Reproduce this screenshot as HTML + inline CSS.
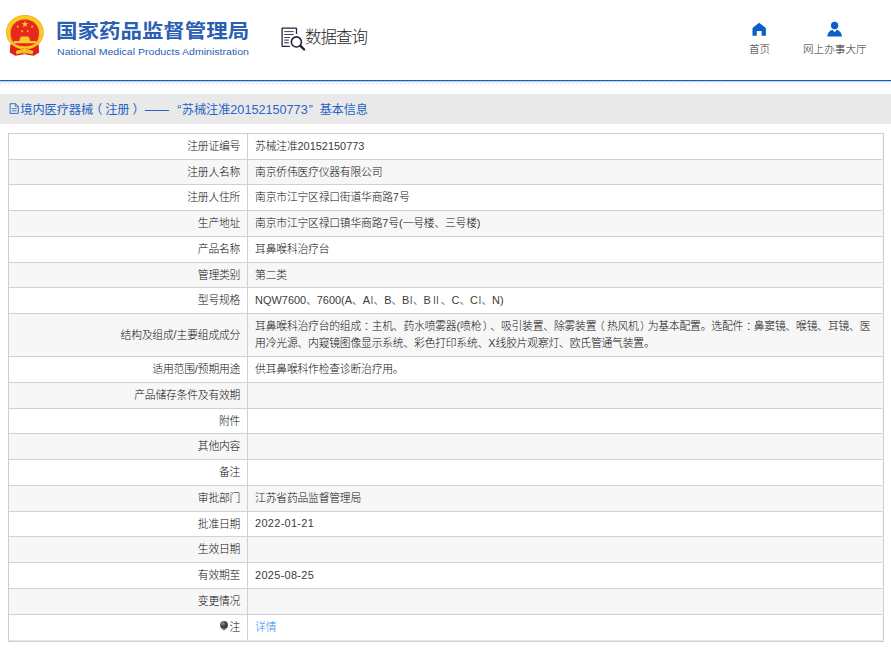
<!DOCTYPE html>
<html lang="zh-CN">
<head>
<meta charset="utf-8">
<title>国家药品监督管理局 数据查询</title>
<style>
*{box-sizing:border-box;margin:0;padding:0}
html,body{width:891px;height:650px;background:#fff;overflow:hidden}
body{position:relative;text-spacing-trim:space-all;font-family:"Liberation Sans","Noto Sans CJK SC",sans-serif;color:#333;font-size:10.5px}
.abs{position:absolute;white-space:nowrap}
#emblem{left:0;top:0}
#t1{left:56.2px;top:16.8px;font-size:19.6px;font-weight:bold;color:#2b5fb4;line-height:28px;transform:scaleX(1.096);transform-origin:0 0}
#t2{left:56.8px;top:44.9px;font-size:9.7px;color:#2b5fb4;line-height:13px;transform:scaleX(1.09);transform-origin:0 0}
#qicon{left:274px;top:20px}
#qtxt{left:305px;top:24px;font-size:16.5px;color:#1c1c1c;font-weight:300;line-height:26px;letter-spacing:-1px}
.nav{font-size:10.6px;color:#2a2a2a;font-weight:300;line-height:14px;text-align:center;letter-spacing:0}
#n1{left:739.5px;top:42px;width:40px}
#n2{left:794.8px;top:42px;width:80px}
#i1{left:748px;top:18px}
#i2{left:822px;top:18px}
#line{left:0;top:80px;width:891px;height:2px;background:linear-gradient(#1560c6 0,#1560c6 1px,rgba(21,96,198,.28) 1px,rgba(21,96,198,.28) 2px);z-index:2}
#hatch{left:0;top:81px;width:891px;height:4px;
 background:repeating-linear-gradient(135deg,#fff 0,#fff 1.83px,#eaeaea 1.98px,#eaeaea 2.83px)}
#bar{left:0;top:94px;width:891px;height:30px;background:#e9e9e9}
#bartxt{left:0;top:101.5px;width:400px;height:16px;font-size:12.25px;line-height:16px;color:#2563c6;letter-spacing:-0.12px}
#bartxt>span{position:absolute;top:0}
#bartxt .bd{color:#2a66c8;font-size:12.65px;letter-spacing:0}
#bartxt i{font-style:normal;position:relative}
#docicon{left:8px;top:101.2px}
#tbl{left:8px;top:133px;width:876px;height:509px;border:1px solid #cfcdcf;background:#f4f5fa}
.r{position:absolute;left:0;width:873px;border-bottom:1px solid #d2d0d2;background:#fff}
.r.g{background:#f7f7f7}
.r.last{border-bottom-color:#e6e7ee}
.r .k,.r .v{font-size:10.8px;letter-spacing:-0.2px;font-weight:300;color:#0c0c0c;line-height:17.3px}
.r .k>span,.r .v>span{position:relative;top:0.3px}
.l{letter-spacing:0;color:#3c3c3c;font-size:10.95px;position:relative;top:-0.4px}
.d{letter-spacing:0.3px}
.bulb{vertical-align:-0.3px;margin-right:1.2px}
i{font-style:normal;position:relative}
.pl{left:-2.2px}.pr{left:1.4px;margin-right:-1.6px}.pc{left:2.8px}
.rn1{display:inline-block;width:10.6px;margin:0 -3.5px}
.rn2{display:inline-block;width:10.6px;margin:0 -0.3px}
.r .k{position:absolute;left:0;top:0;bottom:0;width:239px;border-right:1px solid #d2d0d2;text-align:right;padding-right:6.8px;display:flex;align-items:center;justify-content:flex-end;white-space:nowrap}
.r .v{position:absolute;left:239px;top:0;bottom:0;right:0;padding-left:7.1px;display:flex;align-items:center}
a{color:#2f8ef0;text-decoration:none}
</style>
</head>
<body>
<svg id="emblem" class="abs" viewBox="0 0 56 64" width="56" height="64">
<path d="M10.4 44.2 L9.7 52.6 L15.2 55.7 L24.5 54.2 L33.8 55.7 L39.2 52.6 L38.6 44.2 Z" fill="#dd241c"/>
<ellipse cx="24.9" cy="32.3" rx="18.9" ry="17.3" fill="#f3ab20"/>
<ellipse cx="24.9" cy="32.3" rx="18.2" ry="16.6" fill="#f8cb26"/>
<path d="M10.2 32.3 A14.6 13.3 0 0 1 39.4 32.3 C39.4 41.8 35.8 46.7 24.8 46.7 C13.8 46.7 10.2 41.8 10.2 32.3 Z" fill="#f2a722"/>
<path d="M10.7 32.3 A14.1 12.8 0 0 1 38.9 32.3 C38.9 41.5 35.5 46.2 24.8 46.2 C14.1 46.2 10.7 41.5 10.7 32.3 Z" fill="#e8281e"/>
<polygon points="25.00,20.80 25.84,23.04 28.23,23.15 26.36,24.64 27.00,26.95 25.00,25.63 23.00,26.95 23.64,24.64 21.77,23.15 24.16,23.04" fill="#f8cc2a"/>
<polygon points="17.80,25.10 18.17,26.09 19.23,26.14 18.40,26.79 18.68,27.81 17.80,27.23 16.92,27.81 17.20,26.79 16.37,26.14 17.43,26.09" fill="#f8cc2a"/>
<polygon points="32.10,25.10 32.47,26.09 33.53,26.14 32.70,26.79 32.98,27.81 32.10,27.23 31.22,27.81 31.50,26.79 30.67,26.14 31.73,26.09" fill="#f8cc2a"/>
<polygon points="22.20,29.70 22.57,30.69 23.63,30.74 22.80,31.39 23.08,32.41 22.20,31.83 21.32,32.41 21.60,31.39 20.77,30.74 21.83,30.69" fill="#f8cc2a"/>
<polygon points="27.80,29.70 28.17,30.69 29.23,30.74 28.40,31.39 28.68,32.41 27.80,31.83 26.92,32.41 27.20,31.39 26.37,30.74 27.43,30.69" fill="#f8cc2a"/>
<path d="M19.4 40.9 L20.2 37.6 L21.6 36.4 L27.9 36.4 L29.3 37.6 L30 40.9 L36.2 41 L36.4 43.3 L13.6 43.3 L13.8 41 Z" fill="#f8cc2a"/>
<path d="M15.8 51 Q20 49.2 22.6 50.6 Q24.6 48 26.6 50.6 Q29 49.2 33.4 51 L32.6 54.2 L24.5 52.8 L16.4 54.2 Z" fill="#f5c422"/>
<ellipse cx="22.6" cy="48.4" rx="2.3" ry="1.9" fill="#f6c824"/>
<ellipse cx="26.8" cy="48.4" rx="2.3" ry="1.9" fill="#f6c824"/>
<ellipse cx="22.6" cy="48.5" rx="0.9" ry="0.6" fill="#e6541e"/>
<ellipse cx="26.8" cy="48.5" rx="0.9" ry="0.6" fill="#e6541e"/>
<ellipse cx="24.6" cy="52.6" rx="2.4" ry="1.2" fill="#f1b21e"/>
</svg>
<div id="t1" class="abs">国家药品监督管理局</div>
<div id="t2" class="abs">National Medical Products Administration</div>
<svg id="qicon" class="abs" viewBox="274 20 40 36" width="40" height="36">
<path d="M296.5 34 V28.6 Q296.5 28.1 296 28.1 H282.6 Q282.1 28.1 282.1 28.6 V45.9 Q282.1 46.4 282.6 46.4 H289.9" fill="none" stroke="#26263e" stroke-width="1.3"/>
<g stroke="#2a2a42" stroke-width="0.9"><path d="M284.2 31.6 H293.7"/><path d="M284.2 34.5 H293.7"/><path d="M284.2 37.5 H290"/><path d="M284.2 40.1 H288.8" stroke-width="1.2" stroke="#4a4a60"/><path d="M284.2 42.7 H288.8" stroke-width="1.2" stroke="#4a4a60"/></g>
<circle cx="296.4" cy="41.9" r="5.05" fill="#fff" stroke="#1f1f38" stroke-width="1.55"/>
<path d="M300.5 45.9 L304.1 49.5" stroke="#1f1f38" stroke-width="2.4" stroke-linecap="round"/>
</svg>
<div id="qtxt" class="abs">数据查询</div>
<svg id="i1" class="abs" viewBox="748 18 24 22" width="24" height="22">
<path d="M759.15 22.7 L765.9 27.9 V35.8 H761.6 V31 H756.8 V35.8 H752.5 V27.9 Z" fill="#0a60c8"/>
</svg>
<svg id="i2" class="abs" viewBox="822 18 26 22" width="26" height="22">
<circle cx="834.6" cy="25.5" r="3.65" fill="#0a60c8"/>
<path d="M827.3 36.5 Q827.6 31.5 832.4 29.7 L834.6 32.2 L836.8 29.7 Q841.6 31.5 842 36.5 Z" fill="#0a60c8"/>
</svg>
<div id="n1" class="abs nav">首页</div>
<div id="n2" class="abs nav">网上办事大厅</div>
<div id="line" class="abs"></div>
<div id="hatch" class="abs"></div>
<div id="bar" class="abs"></div>
<svg id="docicon" class="abs" viewBox="8 102 13 15" width="13" height="15">
<path d="M10.1 104.7 H15.6 L18.3 107.4 V114.4 H10.1 Z" fill="none" stroke="#2a66c4" stroke-width="0.95"/>
<path d="M15.4 104.9 V107.6 H18.1" fill="none" stroke="#2a66c4" stroke-width="0.8"/>
<path d="M11.8 109.6 H16.6 M11.8 111.8 H16.6" stroke="#2a66c4" stroke-width="0.8"/>
</svg>
<div id="bartxt" class="abs"><span style="left:20.3px">境内医疗器械<i style="left:-3px">（</i>注册<i style="left:3px">）</i></span><span style="left:144.7px">——</span><span style="left:177.3px">“</span><span style="left:181.8px">苏械注准<span class="bd">20152150773</span></span><span style="left:308.7px">”</span><span style="left:319.4px">基本信息</span></div>
<div id="tbl" class="abs">
<div class="r" style="top:0px;height:26px"><div class="k"><span>注册证编号</span></div><div class="v"><span>苏械注准<span class="l">20152150773</span></span></div></div>
<div class="r g" style="top:26px;height:25px"><div class="k"><span>注册人名称</span></div><div class="v"><span>南京侨伟医疗仪器有限公司</span></div></div>
<div class="r" style="top:51px;height:26px"><div class="k"><span>注册人住所</span></div><div class="v"><span>南京市江宁区禄口街道华商路<span class="l">7</span>号</span></div></div>
<div class="r g" style="top:77px;height:26px"><div class="k"><span>生产地址</span></div><div class="v"><span>南京市江宁区禄口镇华商路<span class="l">7</span>号<span class="l">(</span>一号楼、三号楼<span class="l">)</span></span></div></div>
<div class="r" style="top:103px;height:26px"><div class="k"><span>产品名称</span></div><div class="v"><span>耳鼻喉科治疗台</span></div></div>
<div class="r g" style="top:129px;height:25px"><div class="k"><span>管理类别</span></div><div class="v"><span>第二类</span></div></div>
<div class="r" style="top:154px;height:26px"><div class="k"><span>型号规格</span></div><div class="v"><span><span class="l">NQW7600</span>、<span class="l">7600(A</span>、<span class="l">A</span><span class="rn1">Ⅰ</span>、<span class="l">B</span>、<span class="l">B</span><span class="rn1">Ⅰ</span>、<span class="l">B</span><span class="rn2">Ⅱ</span>、<span class="l">C</span>、<span class="l">C</span><span class="rn1">Ⅰ</span>、<span class="l">N)</span></span></div></div>
<div class="r g" style="top:180px;height:43px"><div class="k"><span>结构及组成<span class="l">/</span>主要组成成分</span></div><div class="v"><span>耳鼻喉科治疗台的组成<i class="pc">：</i>主机、药水喷雾器<span class="l">(</span>喷枪<i class="pr">）</i>、吸引装置、除雾装置<i class="pl">（</i>热风机<i class="pr">）</i>为基本配置。选配件<i class="pc">：</i>鼻窦镜、喉镜、耳镜、医<br>用冷光源、内窥镜图像显示系统、彩色打印系统、<span class="l">X</span>线胶片观察灯、欧氏管通气装置。</span></div></div>
<div class="r" style="top:223px;height:26px"><div class="k"><span>适用范围<span class="l">/</span>预期用途</span></div><div class="v"><span>供耳鼻喉科作检查诊断治疗用。</span></div></div>
<div class="r g" style="top:249px;height:26px"><div class="k"><span>产品储存条件及有效期</span></div><div class="v"><span></span></div></div>
<div class="r" style="top:275px;height:25px"><div class="k"><span>附件</span></div><div class="v"><span></span></div></div>
<div class="r g" style="top:300px;height:26px"><div class="k"><span>其他内容</span></div><div class="v"><span></span></div></div>
<div class="r" style="top:326px;height:26px"><div class="k"><span>备注</span></div><div class="v"><span></span></div></div>
<div class="r g" style="top:352px;height:26px"><div class="k"><span>审批部门</span></div><div class="v"><span>江苏省药品监督管理局</span></div></div>
<div class="r" style="top:378px;height:25px"><div class="k"><span>批准日期</span></div><div class="v"><span><span class="l d">2022-01-21</span></span></div></div>
<div class="r g" style="top:403px;height:26px"><div class="k"><span>生效日期</span></div><div class="v"><span></span></div></div>
<div class="r" style="top:429px;height:26px"><div class="k"><span>有效期至</span></div><div class="v"><span><span class="l d">2025-08-25</span></span></div></div>
<div class="r g" style="top:455px;height:26px"><div class="k"><span>变更情况</span></div><div class="v"><span></span></div></div>
<div class="r last" style="top:481px;height:26px"><div class="k"><span><svg class="bulb" viewBox="0 0 8 10" width="8" height="10"><defs><radialGradient id="bg" cx="35%" cy="30%" r="75%"><stop offset="0" stop-color="#9a9a9a"/><stop offset="0.45" stop-color="#4a4a4a"/><stop offset="1" stop-color="#2e2e2e"/></radialGradient></defs><circle cx="4" cy="3.9" r="3.9" fill="url(#bg)"/><path d="M2.4 7.3 H5.6 V8.6 Q4 10.2 2.4 8.6 Z" fill="#777"/></svg>注</span></div><div class="v"><span><a>详情</a></span></div></div>
</div>
</body>
</html>
